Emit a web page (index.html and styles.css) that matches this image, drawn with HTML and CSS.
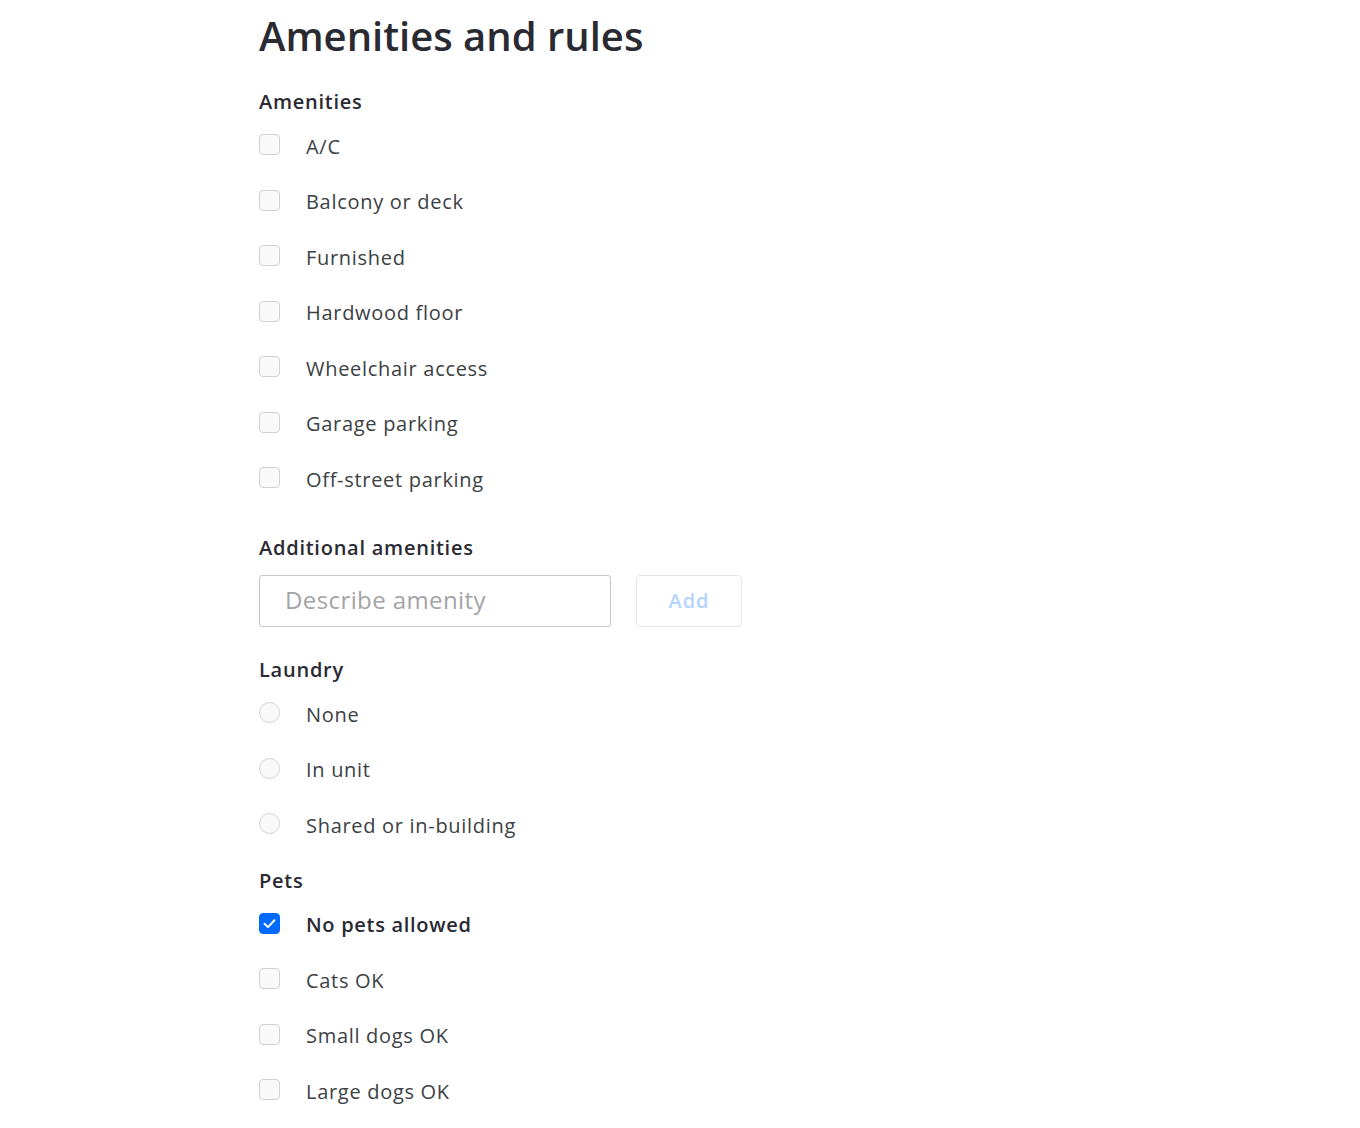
FILE: index.html
```html
<!DOCTYPE html>
<html lang="en">
<head>
<meta charset="utf-8">
<title>Amenities and rules</title>
<link rel="stylesheet" href="styles.css">
</head>
<body>
<main class="page">
  <h1 class="title">Amenities and rules</h1>

  <section class="group group-amenities">
    <h2 class="label">Amenities</h2>
    <label class="row"><span class="box"></span><span class="text">A/C</span></label>
    <label class="row"><span class="box"></span><span class="text">Balcony or deck</span></label>
    <label class="row"><span class="box"></span><span class="text">Furnished</span></label>
    <label class="row"><span class="box"></span><span class="text">Hardwood floor</span></label>
    <label class="row"><span class="box"></span><span class="text">Wheelchair access</span></label>
    <label class="row"><span class="box"></span><span class="text">Garage parking</span></label>
    <label class="row"><span class="box"></span><span class="text">Off-street parking</span></label>
  </section>

  <section class="group group-additional">
    <h2 class="label label-additional">Additional amenities</h2>
    <div class="add-row">
      <input class="field" type="text" placeholder="Describe amenity">
      <button class="add-btn" type="button" disabled>Add</button>
    </div>
  </section>

  <section class="group group-laundry">
    <h2 class="label">Laundry</h2>
    <label class="row"><span class="radio"></span><span class="text">None</span></label>
    <label class="row"><span class="radio"></span><span class="text">In unit</span></label>
    <label class="row"><span class="radio"></span><span class="text">Shared or in-building</span></label>
  </section>

  <section class="group group-pets">
    <h2 class="label">Pets</h2>
    <label class="row row-checked"><span class="box box-checked"><svg viewBox="0 0 21 21" width="21" height="21" aria-hidden="true"><path d="M5 10.8 L8.8 14.5 L16 6.9" fill="none" stroke="#fff" stroke-width="2.2" stroke-linecap="round" stroke-linejoin="round"/></svg></span><span class="text">No pets allowed</span></label>
    <label class="row"><span class="box"></span><span class="text">Cats OK</span></label>
    <label class="row"><span class="box"></span><span class="text">Small dogs OK</span></label>
    <label class="row"><span class="box"></span><span class="text">Large dogs OK</span></label>
  </section>
</main>
</body>
</html>
```

FILE: styles.css
```css
* { box-sizing: border-box; }

html, body {
  margin: 0;
  padding: 0;
  background: #ffffff;
}

body {
  font-family: "Open Sans", "Liberation Sans", sans-serif;
  color: #3b4144;
}

.page {
  padding: 12px 0 0 259px;
  width: 1360px;
}

.title {
  margin: 0;
  font-size: 40px;
  line-height: 48px;
  font-weight: 600;
  color: #2a2a33;
}

.group {
  display: flex;
  flex-direction: column;
  align-items: flex-start;
}

.group-amenities { margin-top: 28px; }
.group-additional { margin-top: 28.7px; }
.group-laundry { margin-top: 29px; }
.group-pets { margin-top: 15px; }

.label {
  margin: 0 0 1px 0;
  font-size: 20px;
  line-height: 28px;
  font-weight: 600;
  color: #2a2a33;
  letter-spacing: 0.75px;
}

.label-additional { margin-bottom: 13px; }

.row {
  display: flex;
  align-items: center;
  height: 55.5px;
  font-size: 20px;
  line-height: 28px;
  color: #3b4144;
  cursor: pointer;
}

.box,
.radio {
  flex: none;
  width: 21px;
  height: 21px;
  border: 1px solid #d1d1d5;
  background: #f9f9fa;
  margin-right: 26px;
  display: flex;
  align-items: center;
  justify-content: center;
}

.box { border-radius: 4px; }
.radio { border-radius: 50%; }

.box-checked {
  background: #006aff;
  border-color: #006aff;
}

.box-checked svg { display: block; }

.text {
  white-space: nowrap;
  letter-spacing: 0.7px;
  padding-top: 4px;
}

.row-checked .text {
  font-weight: 600;
  color: #2a2a33;
}

.add-row {
  display: flex;
  align-items: center;
  gap: 25px;
}

.field {
  width: 352px;
  height: 52px;
  border: 1px solid #c6c6cb;
  border-radius: 3px;
  padding: 0 25px 3px 25px;
  font-family: "Open Sans", "Liberation Sans", sans-serif;
  font-size: 24px;
  letter-spacing: 0.4px;
  color: #3b4144;
  background: #fff;
  outline: none;
}

.field::placeholder { color: #a3a3a8; }

.add-btn {
  width: 106px;
  height: 52px;
  border: 1px solid #e5e5e8;
  border-radius: 4px;
  background: #fff;
  font-family: "Open Sans", "Liberation Sans", sans-serif;
  font-size: 20px;
  font-weight: 600;
  letter-spacing: 1px;
  color: #b5d3ff;
  padding: 0 0 2px 0;
}
```
